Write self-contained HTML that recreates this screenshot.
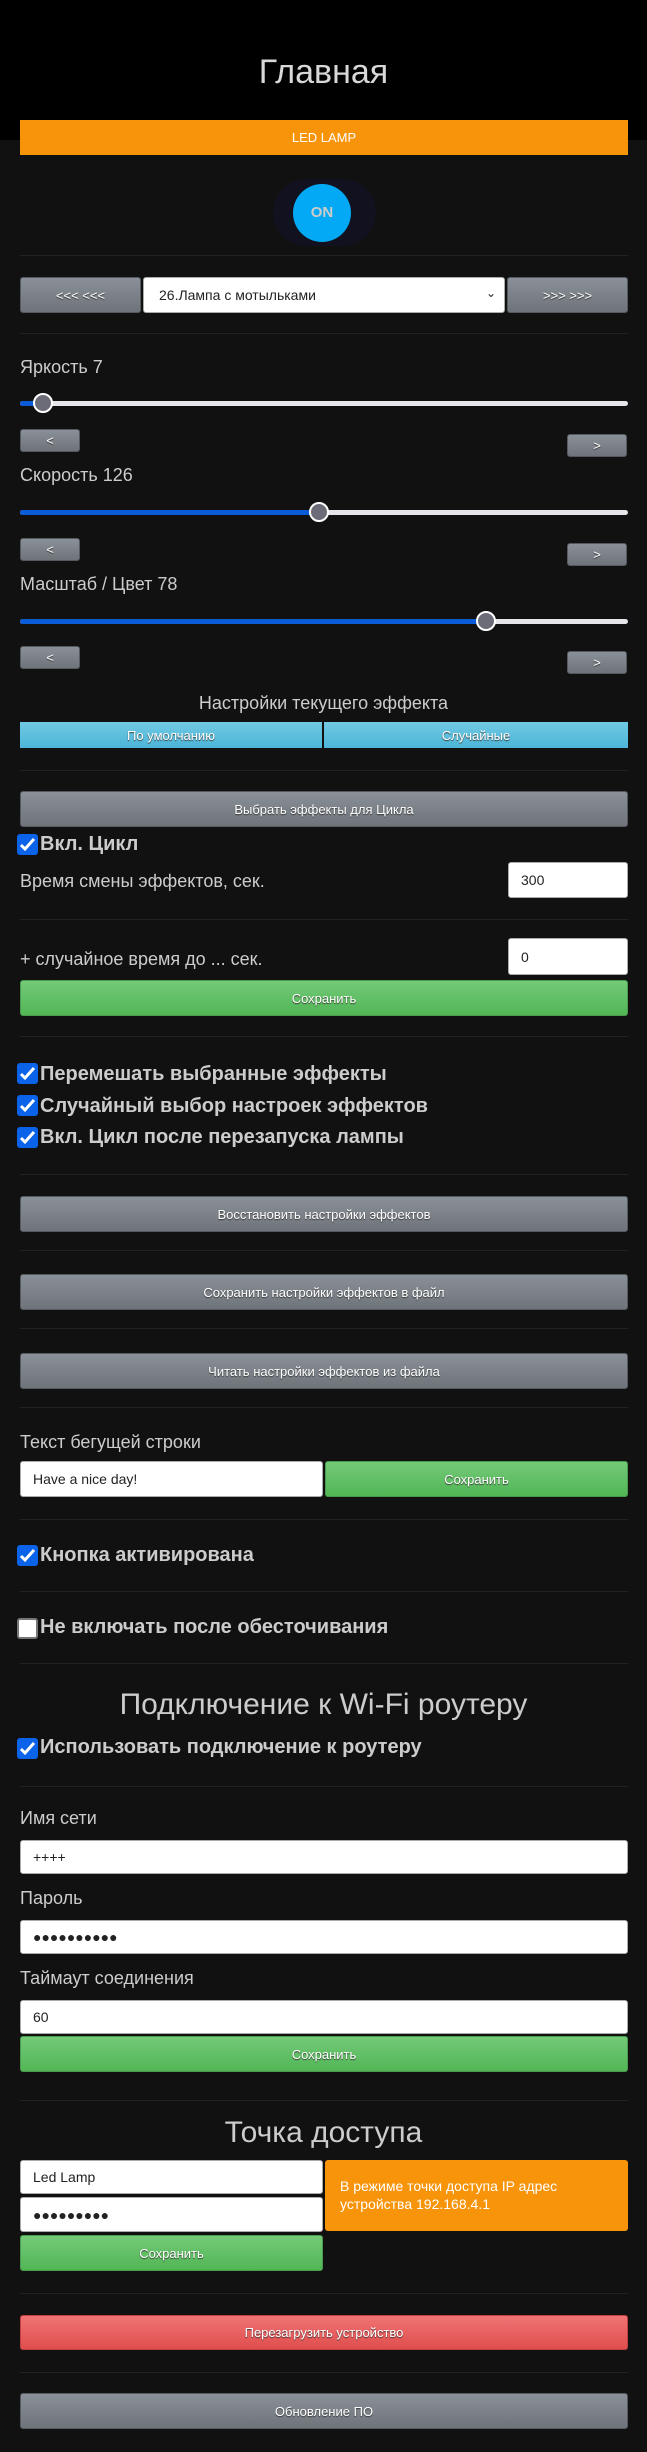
<!DOCTYPE html>
<html><head><meta charset="utf-8"><style>
*{box-sizing:border-box;margin:0;padding:0}
body{width:647px;height:2452px;background:#111;position:relative;overflow:hidden;font-family:"Liberation Sans",sans-serif;color:#ccc}
.a{position:absolute}
.hdr{left:0;top:0;width:647px;height:140px;background:#000}
.t{width:647px;left:0;text-align:center}
.hr{left:20px;width:608px;height:1px;background:#222}
.btn{background:linear-gradient(#8a9097,#6e747a);border:1px solid #555a60;border-radius:3px;color:#fff;font-size:13px;text-align:center;text-shadow:0 1px 1px #333;display:flex;align-items:center;justify-content:center}
.g{background:linear-gradient(#74ca78,#52b655);border-color:#4a9a4d}
.r{background:linear-gradient(#f07474,#e04d4d);border-color:#c04040}
.cy{background:linear-gradient(#72c9e3,#4bb5d8);border:none;border-radius:0}
.inp{background:#fff;border:1px solid #aaa;border-radius:3px;color:#222;font-size:14px;display:flex;align-items:center;padding-left:12px}
.lbl{left:20px;font-size:18px;color:#ccc}
.cb{left:17px;width:21px;height:21px;background:#0a63e8;border-radius:3px}
.cb svg{position:absolute;left:2px;top:3px}
.cbt{left:40px;font-weight:bold;font-size:20px;color:#ccc}
.trk{left:20px;width:608px;height:5px;background:#e5e5ea;border-radius:3px}
.fill{height:5px;background:#0a5bd8;border-radius:3px;position:absolute;left:0;top:0}
.th{width:20px;height:20px;border-radius:50%;background:#6b6c78;border:2px solid #fff;position:absolute;top:-8px}
.sb{width:60px;height:23px;font-size:13px}
</style></head><body>
<div class="a hdr"></div>
<div class="a t" style="top:53px;font-size:34px;color:#d8d8d8">Главная</div>
<div class="a" style="left:20px;top:120px;width:608px;height:35px;background:#f7940a;color:#fff;font-size:13px;text-align:center;line-height:35px">LED LAMP</div>
<div class="a" style="left:273px;top:179px;width:103px;height:67px;border-radius:34px;background:#11111f"></div>
<div class="a" style="left:293px;top:184px;width:58px;height:58px;border-radius:50%;background:#03a9f4;color:#ccc;font-weight:bold;font-size:15px;text-align:center;line-height:58px">ON</div>
<div class="a hr" style="top:255px"></div>
<div class="a btn" style="left:20px;top:277px;width:121px;height:36px">&lt;&lt;&lt; &lt;&lt;&lt;</div>
<div class="a inp" style="left:143px;top:277px;width:362px;height:36px;font-size:14px;color:#222;padding-left:15px">26.Лампа с мотыльками<span style="position:absolute;right:8px;top:8px;font-size:12px">⌄</span></div>
<div class="a btn" style="left:507px;top:277px;width:121px;height:36px">&gt;&gt;&gt; &gt;&gt;&gt;</div>
<div class="a hr" style="top:333px"></div>

<div class="a lbl" style="top:357px">Яркость 7</div>
<div class="a trk" style="top:401px"><div class="fill" style="width:24px"></div><div class="th" style="left:13px"></div></div>
<div class="a btn sb" style="left:20px;top:429px">&lt;</div>
<div class="a btn sb" style="left:567px;top:434px">&gt;</div>
<div class="a lbl" style="top:465px">Скорость 126</div>
<div class="a trk" style="top:510px"><div class="fill" style="width:299px"></div><div class="th" style="left:289px"></div></div>
<div class="a btn sb" style="left:20px;top:538px">&lt;</div>
<div class="a btn sb" style="left:567px;top:543px">&gt;</div>
<div class="a lbl" style="top:574px">Масштаб / Цвет 78</div>
<div class="a trk" style="top:619px"><div class="fill" style="width:466px"></div><div class="th" style="left:456px"></div></div>
<div class="a btn sb" style="left:20px;top:646px">&lt;</div>
<div class="a btn sb" style="left:567px;top:651px">&gt;</div>
<div class="a t" style="top:693px;font-size:18px">Настройки текущего эффекта</div>
<div class="a btn cy" style="left:20px;top:722px;width:302px;height:26px">По умолчанию</div>
<div class="a btn cy" style="left:324px;top:722px;width:304px;height:26px">Случайные</div>
<div class="a hr" style="top:770px"></div>
<div class="a btn" style="left:20px;top:791px;width:608px;height:36px">Выбрать эффекты для Цикла</div>
<div class="a cb" style="top:834px"><svg width="17" height="15" viewBox="0 0 17 15"><path d="M2 8l4 4 9-10" stroke="#fff" stroke-width="3" fill="none"/></svg></div>
<div class="a cbt" style="top:833px">Вкл. Цикл</div>
<div class="a lbl" style="top:871px">Время смены эффектов, сек.</div>
<div class="a inp" style="left:508px;top:862px;width:120px;height:36px">300</div>
<div class="a hr" style="top:919px"></div>
<div class="a lbl" style="top:949px">+ случайное время до ... сек.</div>
<div class="a inp" style="left:508px;top:938px;width:120px;height:37px">0</div>
<div class="a btn g" style="left:20px;top:980px;width:608px;height:36px">Сохранить</div>
<div class="a hr" style="top:1036px"></div>
<div class="a cb" style="top:1063px"><svg width="17" height="15" viewBox="0 0 17 15"><path d="M2 8l4 4 9-10" stroke="#fff" stroke-width="3" fill="none"/></svg></div>
<div class="a cbt" style="top:1063px">Перемешать выбранные эффекты</div>
<div class="a cb" style="top:1095px"><svg width="17" height="15" viewBox="0 0 17 15"><path d="M2 8l4 4 9-10" stroke="#fff" stroke-width="3" fill="none"/></svg></div>
<div class="a cbt" style="top:1095px">Случайный выбор настроек эффектов</div>
<div class="a cb" style="top:1127px"><svg width="17" height="15" viewBox="0 0 17 15"><path d="M2 8l4 4 9-10" stroke="#fff" stroke-width="3" fill="none"/></svg></div>
<div class="a cbt" style="top:1126px">Вкл. Цикл после перезапуска лампы</div>
<div class="a hr" style="top:1174px"></div>
<div class="a btn" style="left:20px;top:1196px;width:608px;height:36px">Восстановить настройки эффектов</div>
<div class="a hr" style="top:1250px"></div>
<div class="a btn" style="left:20px;top:1274px;width:608px;height:36px">Сохранить настройки эффектов в файл</div>
<div class="a hr" style="top:1328px"></div>
<div class="a btn" style="left:20px;top:1353px;width:608px;height:36px">Читать настройки эффектов из файла</div>
<div class="a hr" style="top:1407px"></div>
<div class="a lbl" style="top:1432px">Текст бегущей строки</div>
<div class="a inp" style="left:20px;top:1461px;width:303px;height:36px">Have a nice day!</div>
<div class="a btn g" style="left:325px;top:1461px;width:303px;height:36px">Сохранить</div>
<div class="a hr" style="top:1519px"></div>
<div class="a cb" style="top:1545px"><svg width="17" height="15" viewBox="0 0 17 15"><path d="M2 8l4 4 9-10" stroke="#fff" stroke-width="3" fill="none"/></svg></div>
<div class="a cbt" style="top:1544px">Кнопка активирована</div>
<div class="a hr" style="top:1591px"></div>
<div class="a cb" style="top:1618px;background:#fff;border:2px solid #777"></div>
<div class="a cbt" style="top:1616px">Не включать после обесточивания</div>
<div class="a hr" style="top:1663px"></div>
<div class="a t" style="top:1688px;font-size:30px">Подключение к Wi-Fi роутеру</div>
<div class="a cb" style="top:1738px"><svg width="17" height="15" viewBox="0 0 17 15"><path d="M2 8l4 4 9-10" stroke="#fff" stroke-width="3" fill="none"/></svg></div>
<div class="a cbt" style="top:1736px">Использовать подключение к роутеру</div>
<div class="a hr" style="top:1786px"></div>
<div class="a lbl" style="top:1808px">Имя сети</div>
<div class="a inp" style="left:20px;top:1840px;width:608px;height:34px">++++</div>
<div class="a lbl" style="top:1888px">Пароль</div>
<div class="a inp" style="left:20px;top:1920px;width:608px;height:34px">●●●●●●●●●●</div>
<div class="a lbl" style="top:1968px">Таймаут соединения</div>
<div class="a inp" style="left:20px;top:2000px;width:608px;height:34px">60</div>
<div class="a btn g" style="left:20px;top:2036px;width:608px;height:36px">Сохранить</div>
<div class="a hr" style="top:2100px"></div>
<div class="a t" style="top:2116px;font-size:30px">Точка доступа</div>
<div class="a inp" style="left:20px;top:2160px;width:303px;height:34px">Led Lamp</div>
<div class="a inp" style="left:20px;top:2197px;width:303px;height:35px">●●●●●●●●●</div>
<div class="a btn g" style="left:20px;top:2235px;width:303px;height:36px">Сохранить</div>
<div class="a" style="left:325px;top:2160px;width:303px;height:71px;background:#f7940a;border-radius:3px;color:#fff;font-size:14px;line-height:18px;padding:17px 40px 0 15px">В режиме точки доступа IP адрес устройства 192.168.4.1</div>
<div class="a hr" style="top:2293px"></div>
<div class="a btn r" style="left:20px;top:2315px;width:608px;height:35px">Перезагрузить устройство</div>
<div class="a hr" style="top:2372px"></div>
<div class="a btn" style="left:20px;top:2393px;width:608px;height:36px">Обновление ПО</div>
</body></html>
